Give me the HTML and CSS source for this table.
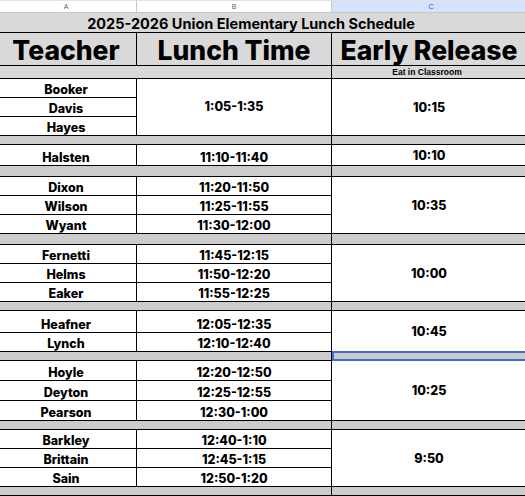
FILE: index.html
```html
<!DOCTYPE html>
<html>
<head>
<meta charset="utf-8">
<link rel="stylesheet" href="styles.css">
</head>
<body>
<div class="sheet">
  <div class="hdr">A</div>
  <div class="hdr">B</div>
  <div class="hdr hdr-sel">C</div>

  <div class="title">2025-2026 Union Elementary Lunch Schedule</div>

  <div class="head">Teacher</div>
  <div class="head">Lunch Time</div>
  <div class="head colc">Early Release</div>

  <div class="gap sub"></div>
  <div class="note colc">Eat in Classroom</div>

  <div class="name">Booker</div>
  <div class="time span3">1:05-1:35</div>
  <div class="rel colc span3">10:15</div>
  <div class="name">Davis</div>
  <div class="name">Hayes</div>

  <div class="gap"></div><div class="gapc colc"></div>

  <div class="name">Halsten</div>
  <div class="time">11:10-11:40</div>
  <div class="rel colc">10:10</div>

  <div class="gap"></div><div class="gapc colc"></div>

  <div class="name">Dixon</div>
  <div class="time">11:20-11:50</div>
  <div class="rel colc span3">10:35</div>
  <div class="name">Wilson</div>
  <div class="time">11:25-11:55</div>
  <div class="name">Wyant</div>
  <div class="time">11:30-12:00</div>

  <div class="gap"></div><div class="gapc colc"></div>

  <div class="name">Fernetti</div>
  <div class="time">11:45-12:15</div>
  <div class="rel colc span3">10:00</div>
  <div class="name">Helms</div>
  <div class="time">11:50-12:20</div>
  <div class="name">Eaker</div>
  <div class="time">11:55-12:25</div>

  <div class="gap"></div><div class="gapc colc"></div>

  <div class="name">Heafner</div>
  <div class="time">12:05-12:35</div>
  <div class="rel colc span2">10:45</div>
  <div class="name">Lynch</div>
  <div class="time">12:10-12:40</div>

  <div class="gap"></div><div class="gapc colc selected"></div>

  <div class="name">Hoyle</div>
  <div class="time">12:20-12:50</div>
  <div class="rel colc span3">10:25</div>
  <div class="name">Deyton</div>
  <div class="time">12:25-12:55</div>
  <div class="name">Pearson</div>
  <div class="time">12:30-1:00</div>

  <div class="gap"></div><div class="gapc colc"></div>

  <div class="name">Barkley</div>
  <div class="time">12:40-1:10</div>
  <div class="rel colc span3">9:50</div>
  <div class="name">Brittain</div>
  <div class="time">12:45-1:15</div>
  <div class="name">Sain</div>
  <div class="time">12:50-1:20</div>

  <div class="gap"></div><div class="gapc colc"></div>
</div>
</body>
</html>
```

FILE: styles.css
```css
html, body {
  margin: 0;
  padding: 0;
  background: #ffffff;
  overflow: hidden;
}

body {
  font-family: Inter, "Open Sans", sans-serif;
  color: #000;
}

.sheet {
  display: grid;
  grid-template-columns: 141px 195px 198px;
  grid-template-rows:
    13px 20px 33px 13px
    19px 19px 19px 9px
    21px 11px
    19px 19px 19px 11px
    19px 19px 19px 9px
    22px 19px 9px
    20px 20px 20px 9px
    19px 19px 19px 9px;
  margin-left: -4px;
  width: 534px;
}

.sheet > div {
  box-sizing: border-box;
  display: flex;
  align-items: center;
  justify-content: center;
  white-space: nowrap;
  overflow: hidden;
  border-right: 1px solid #000;
  border-bottom: 1px solid #000;
}

.sheet > .colc {
  border-right: none;
  padding-right: 4px;
}

.sheet > .hdr {
  font-family: "Liberation Sans", Arial, sans-serif;
  font-size: 7px;
  color: #5f6368;
  border-right: 1px solid #c7c7c7;
  border-bottom: 1px solid #c7c7c7;
  border-top: 1px solid #e3e3e3;
}

.sheet > .hdr-sel {
  background: #d3e3fd;
  color: #0b57d0;
  border-right: none;
}

.sheet > .title {
  grid-column: span 3;
  background: #d9d9d9;
  border-right: none;
  font-weight: 700;
  font-size: 14.5px;
  padding-right: 24px;
  padding-top: 1px;
}

.sheet > .head {
  background: #d9d9d9;
  font-weight: 800;
  font-size: 26.5px;
  padding-top: 2px;
}

.sheet > .gap {
  grid-column: span 2;
  background: #cccccc;
}

.sheet > .gap.sub {
  background: #d9d9d9;
}

.sheet > .gapc {
  background: #cccccc;
}

.sheet > .note {
  background: #d9d9d9;
  font-family: "Liberation Sans", Arial, sans-serif;
  font-size: 8.5px;
  font-weight: 700;
  padding-right: 8px;
}

.sheet > .name,
.sheet > .time {
  align-items: flex-end;
  font-weight: 800;
  font-size: 12.5px;
  line-height: 14px;
}

.sheet > .time.span3 {
  align-items: center;
}

.sheet > .rel {
  font-weight: 800;
  font-size: 12.5px;
}

.span2 {
  grid-row: span 2;
}

.span3 {
  grid-row: span 3;
}

.sheet > .selected {
  position: relative;
  overflow: visible;
}

.selected::after {
  content: "";
  position: absolute;
  left: 0;
  right: -2px;
  top: -1px;
  bottom: -1px;
  border: 2px solid #3d6fdc;
}
```
